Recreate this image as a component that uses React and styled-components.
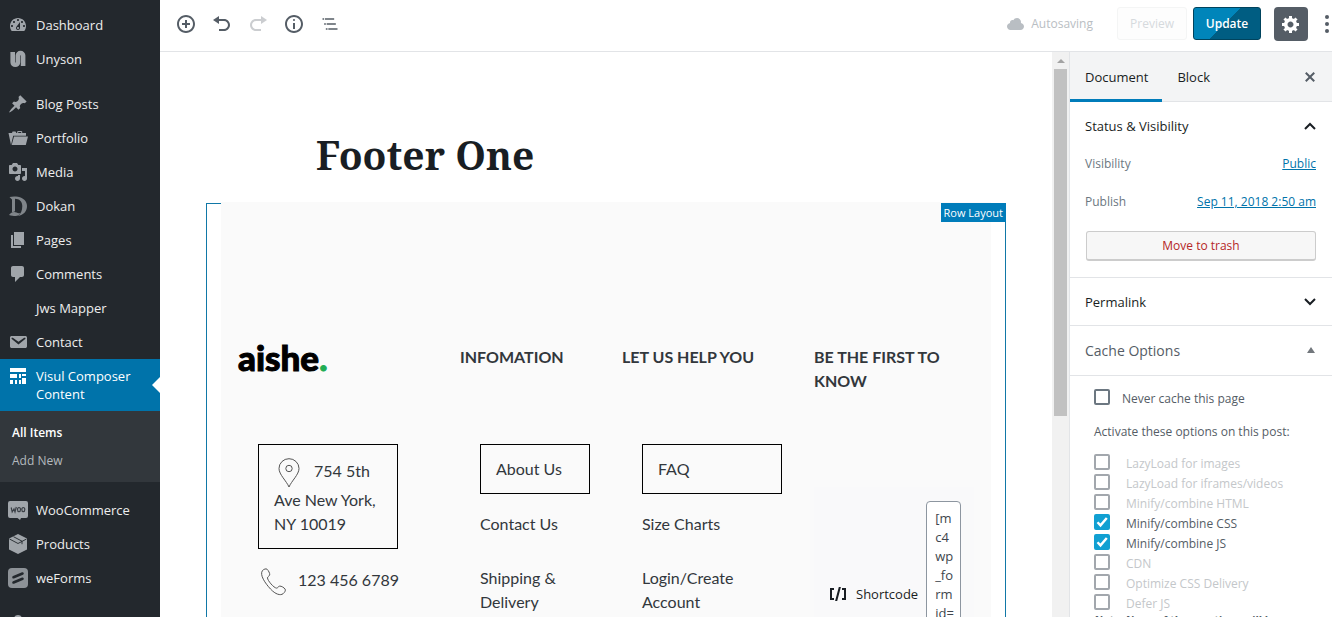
import React from "react";
import styled, { createGlobalStyle, css } from "styled-components";

const ui = '"Open Sans", "Noto Sans", sans-serif';

const GlobalStyle = createGlobalStyle`
  *, *::before, *::after { box-sizing: border-box; }
  body { margin: 0; background: #fff; font: 13px/20px ${ui}; color: #555d66; }
  button, input, textarea { font: inherit; color: inherit; margin: 0; }
  button { border: 0; background: none; padding: 0; cursor: pointer; }
  a { color: #0073aa; }
  h1, h2, ul, p { margin: 0; padding: 0; font-weight: inherit; font-size: inherit; }
  ul { list-style: none; }
  svg { display: block; flex: none; }
`;

const Shell = styled.div`
  display: flex;
  height: 100vh;
  overflow: hidden;
`;

/* Admin menu */
const AdminMenu = styled.nav`
  flex: none;
  width: 160px;
  padding-top: 8px;
  background: #23282d;
  overflow: hidden;
`;
const MenuLink = styled.a`
  position: relative;
  display: flex;
  align-items: flex-start;
  gap: 8px;
  padding: 8px 12px 8px 8px;
  margin-top: ${(p) => (p.$separated ? 11 : 0)}px;
  color: ${(p) => (p.$current ? "#fff" : "#eee")};
  background: ${(p) => (p.$current ? "#0073aa" : "transparent")};
  line-height: 18px;
  text-decoration: none;
  ${(p) =>
    p.$current &&
    css`
      &::after {
        content: "";
        position: absolute;
        right: 0;
        top: 18px;
        border: 8px solid transparent;
        border-right-color: #fff;
        border-left-width: 0;
      }
    `}
`;
const MenuIcon = styled.span`
  flex: none;
  width: 20px;
  height: 18px;
  color: ${(p) => (p.$current ? "#fff" : "#a0a5aa")};
  svg { margin-top: -1px; }
`;
const SubMenu = styled.ul`
  padding: 8px 0 7px;
  background: #32373c;
`;
const SubLink = styled.a`
  display: block;
  padding: 5px 12px;
  font-size: 12px;
  line-height: 18px;
  text-decoration: none;
  color: ${(p) => (p.$current ? "#fff" : "#b4b9be")};
  font-weight: ${(p) => (p.$current ? 600 : 400)};
`;

/* Editor */
const Editor = styled.div`
  flex: 1;
  min-width: 0;
  display: flex;
  flex-direction: column;
`;
const TopBar = styled.header`
  flex: none;
  display: flex;
  align-items: center;
  justify-content: space-between;
  height: 52px;
  padding: 0 0 4px 8px;
  border-bottom: 1px solid #e2e4e7;
`;
const Tools = styled.div`
  display: flex;
  align-items: center;
`;
const ToolButton = styled.button`
  display: grid;
  place-items: center;
  width: 36px;
  height: 36px;
  color: #555d66;
  &:disabled { opacity: 0.3; }
`;
const SaveState = styled.span`
  display: flex;
  align-items: center;
  gap: 5px;
  margin-right: 24px;
  color: #b9bec3;
  font-size: 12px;
`;
const barButton = css`
  height: 33px;
  border-radius: 3px;
  border: 1px solid;
  font-size: 12px;
`;
const PreviewButton = styled.button`
  ${barButton}
  width: 70px;
  margin-right: 6px;
  border-color: #f4f5f5;
  background: #fdfdfd;
  color: #d6dadd;
`;
const UpdateButton = styled.button`
  ${barButton}
  width: 68px;
  margin-right: 13px;
  border-color: #00435d;
  background: linear-gradient(135deg, #0085ba 48%, #005d82 48%);
  color: #fff;
  font-weight: 600;
`;
const SettingsButton = styled.button`
  display: grid;
  place-items: center;
  width: 34px;
  height: 34px;
  border-radius: 4px;
  background: #555d66;
  color: #fff;
`;
const MoreButton = styled.button`
  width: 24px;
  height: 34px;
  color: #555d66;
  svg { margin-left: auto; }
`;
const Workspace = styled.div`
  flex: 1;
  min-height: 0;
  display: flex;
`;
const Canvas = styled.main`
  flex: 1;
  min-width: 0;
  padding: 79px 46px 0;
  overflow: hidden;
`;
const Content = styled.div`
  max-width: 800px;
  margin: 0 auto;
`;
const PageTitle = styled.h1`
  padding: 0 110px;
  margin-bottom: 24px;
  color: #191e23;
  font: bold 39px/48px "Noto Serif", "DejaVu Serif Condensed", "DejaVu Serif", serif;
`;
const RowBlock = styled.section`
  position: relative;
  border: 1px solid #1178a7;
  border-bottom: 0;
  padding: 0 14px;
`;
const RowLabel = styled.span`
  position: absolute;
  top: -1px;
  right: -1px;
  padding: 0 3px;
  background: #007cba;
  color: #fff;
  font-size: 11px;
  line-height: 19px;
`;
const Columns = styled.div`
  display: grid;
  grid-template-columns: 190fr 130fr 160fr 160fr;
  grid-template-rows: 48px auto;
  gap: 51px 32px;
  min-height: 700px;
  margin-top: -2px;
  padding: 143px 17px 0;
  background: #fafafa;
  color: #32373c;
  font: 16px/24px Lato, sans-serif;
  > * { min-width: 0; }
`;
const Logo = styled.div`
  color: #000;
  font-size: 35px;
  line-height: 24px;
  font-weight: 900;
  -webkit-text-stroke: 1px currentColor;
  span { color: #1fad53; }
`;
const ColumnTitle = styled.h2`
  font-weight: 700;
  color: #32373c;
`;
const LinkList = styled.ul`
  padding-left: 20px;
`;
const LinkItem = styled.li`
  padding: 15px 0;
  ${(p) =>
    p.$boxed &&
    css`
      padding: 12px 15px;
      margin-bottom: 3px;
      border: 1px solid #000;
    `}
`;
const ContactList = styled.div`
  padding: 0 30px 0 20px;
`;
const Address = styled.p`
  padding: 13px 15px 12px;
  border: 1px solid #000;
  svg {
    display: inline-block;
    vertical-align: middle;
    margin: 0 14px 0 4px;
  }
`;
const Phone = styled.p`
  display: flex;
  gap: 12px;
  padding: 19px 0 0 2px;
  white-space: nowrap;
`;
const ShortcodeBlock = styled.div`
  display: flex;
  align-items: center;
  align-self: start;
  margin-top: 43px;
  padding: 14px 12px 14px 14px;
  background: #f9f9fa;
`;
const ShortcodeLabel = styled.label`
  display: flex;
  align-items: center;
  gap: 8px;
  margin-right: 8px;
  color: #191e23;
  font: 13px/20px ${ui};
`;
const ShortcodeInput = styled.textarea`
  flex: none;
  width: 35px;
  height: 186px;
  padding: 7px 4px 7px 8px;
  border: 1px solid #8d96a0;
  border-radius: 4px;
  background: #fff;
  color: #40464d;
  font: 13px/19px ${ui};
  resize: none;
  overflow: hidden;
`;
const ScrollTrack = styled.div`
  flex: none;
  width: 17px;
  padding: 6px 2px 0;
  background: #f1f1f1;
  svg { margin: 0 auto 5px; }
`;
const ScrollThumb = styled.div`
  height: 347px;
  background: #c1c1c1;
`;

/* Settings panel */
const Panel = styled.aside`
  flex: none;
  width: 263px;
  border-left: 1px solid #e2e4e7;
  background: #fff;
  overflow: hidden;
  font-size: 12px;
`;
const PanelTabs = styled.div`
  display: flex;
  height: 50px;
  padding-right: 12px;
  background: #f3f4f5;
  border-bottom: 1px solid #e2e4e7;
`;
const Tab = styled.button`
  padding: 3px 14px 0 15px;
  margin-bottom: -1px;
  border-bottom: 3px solid ${(p) => (p.$active ? "#007cba" : "transparent")};
  color: #191e23;
  font-size: 13px;
`;
const CloseButton = styled.button`
  margin-left: auto;
`;
const Section = styled.section`
  padding: 0 16px ${(p) => (p.$open ? 16 : 0)}px 15px;
  border-bottom: 1px solid #e2e4e7;
`;
const SectionToggle = styled.button`
  display: flex;
  align-items: center;
  justify-content: space-between;
  width: 100%;
  height: ${(p) => (p.$tall ? 49 : 47)}px;
  color: ${(p) => (p.$muted ? "#555d66" : "#191e23")};
  font-size: ${(p) => (p.$muted ? 14 : 13)}px;
`;
const Fields = styled.div`
  display: grid;
  gap: 18px;
  padding: 5px 0 19px;
`;
const Field = styled.div`
  display: flex;
  justify-content: space-between;
  color: #6c7781;
`;
const TrashButton = styled.button`
  display: block;
  width: 230px;
  max-width: 100%;
  height: 30px;
  margin-left: auto;
  border: 1px solid #ccc;
  border-bottom-width: 2px;
  border-radius: 3px;
  background: #f7f7f7;
  color: #b52727;
`;
const Options = styled.div`
  padding: 13px 16px 0 24px;
`;
const OptionText = styled.p`
  margin: 13px 0 12px;
  white-space: nowrap;
`;
const Option = styled.label`
  display: flex;
  align-items: flex-start;
  gap: ${(p) => (p.$loose ? 16 : 12)}px;
  height: 20px;
  color: ${(p) => (p.$off ? "#c4c7ca" : "#555d66")};
  white-space: nowrap;
`;
const Tick = styled.input`
  appearance: none;
  flex: none;
  width: 16px;
  height: 16px;
  border: 2px solid ${(p) => (p.disabled ? "#a2a7ad" : "#6c7781")};
  border-radius: 2px;
  background: #fff;
  &:checked {
    border-color: #11a0d2;
    background: #11a0d2 url("data:image/svg+xml,%3Csvg xmlns='http://www.w3.org/2000/svg' viewBox='0 0 12 12'%3E%3Cpath d='M1.5 6.2l3 3.2L10.8 2' fill='none' stroke='%23fff' stroke-width='2.4'/%3E%3C/svg%3E") center / 12px no-repeat;
  }
`;
const Note = styled.p`
  margin-top: -4px;
  font-size: 11px;
  font-weight: 700;
  font-style: italic;
  white-space: nowrap;
`;

const Glyph = ({ d, size = 20, box = 20, children }) => (
  <svg width={size} height={size} viewBox={`0 0 ${box} ${box}`} fill="currentColor" aria-hidden="true">
    {d && <path d={d} />}
    {children}
  </svg>
);

const icons = {
  dashboard: <Glyph d="M3.76 16h12.48c1.1-1.37 1.76-3.11 1.76-5 0-4.42-3.58-8-8-8s-8 3.58-8 8c0 1.89.66 3.63 1.76 5zM10 4c.55 0 1 .45 1 1s-.45 1-1 1-1-.45-1-1 .45-1 1-1zM6 6c.55 0 1 .45 1 1s-.45 1-1 1-1-.45-1-1 .45-1 1-1zm8 0c.55 0 1 .45 1 1s-.45 1-1 1-1-.45-1-1 .45-1 1-1zm-5.37 5.55L12 7v6c0 1.1-.9 2-2 2s-2-.9-2-2c0-.57.24-1.08.63-1.45zM4 10c.55 0 1 .45 1 1s-.45 1-1 1-1-.45-1-1 .45-1 1-1zm12 0c.55 0 1 .45 1 1s-.45 1-1 1-1-.45-1-1 .45-1 1-1zm-5 3c0-.55-.45-1-1-1s-1 .45-1 1 .45 1 1 1 1-.45 1-1z" />,
  unyson: (
    <Glyph>
      <path d="M4.700 3v10.200a2.600 2.600 0 0 0 5.200 0V6.600a2.600 2.600 0 0 1 5.200 0V17" fill="none" stroke="currentColor" strokeWidth="4.600" />
    </Glyph>
  ),
  pin: <Glyph d="M10.44 3.02l1.82-1.82 6.36 6.35-1.83 1.82c-1.05-.68-2.48-.57-3.41.36l-.75.75c-.92.93-1.04 2.35-.35 3.41l-1.83 1.82-2.41-2.41-2.8 2.79c-.42.42-3.38 2.71-3.8 2.29s1.86-3.39 2.28-3.81l2.79-2.79L4.1 9.36l1.83-1.82c1.05.69 2.48.57 3.4-.36l.75-.75c.93-.92 1.05-2.35.36-3.41z" />,
  portfolio: <Glyph d="M4 5H.5L3 17l2.200-9.200H18V5h-3.800V3.600L13.400 3H10l-.8.6V5h-.8l-.9-1.400H4.600zM10.200 4h3v1h-3zM6 8.500h14L17.800 17H3.700z" />,
  media: <Glyph d="M13 11V4c0-.55-.45-1-1-1h-1.67L9 1H5L3.67 3H2c-.55 0-1 .45-1 1v7c0 .55.45 1 1 1h10c.55 0 1-.45 1-1zM7 4.5c1.38 0 2.5 1.12 2.5 2.5S8.38 9.5 7 9.5 4.5 8.38 4.5 7 5.62 4.5 7 4.5zM14 6h5v10.5c0 1.38-1.12 2.5-2.5 2.5S14 17.88 14 16.5s1.12-2.5 2.5-2.5c.17 0 .34.02.5.05V9h-3V6zm-4 8.05V13h2v3.5c0 1.38-1.12 2.5-2.5 2.5S7 17.88 7 16.5 8.12 14 9.5 14c.17 0 .34.02.5.05z" />,
  dokan: (
    <Glyph>
      <g opacity=".75">
        <path d="M1.500 1C4 .3 7 .2 10 .8c5.500 1.200 9 4.500 9 9.200 0 5.500-3.500 9-9 10 2.800-2 4.300-5.500 4.300-10 0-4.500-3-7.300-7.300-7.300v12.500L4 16.500V3.500z" />
        <path d="M1 19c2-3 5-3.800 7.500-2.500 1.500.8 2.500 1 4 .2-.8 2-2.700 3.300-5 3.300-2 0-4-.2-6.500-1z" />
      </g>
    </Glyph>
  ),
  pages: <Glyph d="M6 15V2h10v13H6zm-1 1h8v2H3V5h2v11z" />,
  comments: <Glyph d="M5 2h9c1.100 0 2 .9 2 2v7c0 1.100-.9 2-2 2h-2l-5 5v-5H5c-1.100 0-2-.9-2-2V4c0-1.100.9-2 2-2z" />,
  mail: <Glyph d="M3.87 4h13.25C18.37 4 19 4.59 19 5.79v8.42c0 1.19-.63 1.79-1.88 1.79H3.87c-1.25 0-1.88-.6-1.88-1.79V5.79c0-1.2.63-1.79 1.88-1.79zm6.62 8.6l6.74-5.53c.24-.2.43-.66.13-1.07-.29-.41-.82-.42-1.17-.17l-5.7 3.86L4.8 5.83c-.35-.25-.88-.24-1.17.17-.3.41-.11.87.13 1.07z" />,
  composer: <Glyph d="M2 2h16v4H2zM2 8h7v4H2zM11 8h2v4h-2zM14 8h4v2h-4zM2 14h3v4H2zM7 14h2v4H7zM11 14h2v4h-2zM14 12h4v6h-4z" />,
  woo: (
    <Glyph>
      <path d="M2 1h16a2 2 0 0 1 2 2v13a2 2 0 0 1-2 2h-5l-1 2-2.500-2H2a2 2 0 0 1-2-2V3a2 2 0 0 1 2-2z" />
      <g fill="none" stroke="#3b4046" strokeWidth="1.200">
        <path d="M3.200 7.500l1 4.500L6 9l1 3 1.300-5" />
        <ellipse cx="11" cy="9.600" rx="1.500" ry="2.100" />
        <ellipse cx="15.300" cy="9.600" rx="1.500" ry="2.100" />
      </g>
    </Glyph>
  ),
  box: (
    <Glyph>
      <path d="M10 0l9 4.500v11L10 20l-9-4.500v-11z" />
      <path d="M1.500 5L10 9.500 18.500 5M5.500 2.700l8.500 4.500v3" fill="none" stroke="#23282d" strokeWidth=".9" />
    </Glyph>
  ),
  weforms: (
    <Glyph>
      <rect width="20" height="20" rx="4" opacity=".85" />
      <path d="M5.500 9.200l9-3.700M5.500 14.500l9-3.700" stroke="#23282d" strokeWidth="2.600" strokeLinecap="round" />
    </Glyph>
  ),
  users: (
    <Glyph>
      <circle cx="10" cy="6" r="4" />
      <path d="M3 18c0-5 3-7 7-7s7 2 7 7z" />
    </Glyph>
  ),
};

const menuTop = [
  ["Dashboard", icons.dashboard],
  ["Unyson", icons.unyson],
  ["Blog Posts", icons.pin, true],
  ["Portfolio", icons.portfolio],
  ["Media", icons.media],
  ["Dokan", icons.dokan],
  ["Pages", icons.pages],
  ["Comments", icons.comments],
  ["Jws Mapper", null],
  ["Contact", icons.mail],
];
const menuBottom = [
  ["WooCommerce", icons.woo, true],
  ["Products", icons.box],
  ["weForms", icons.weforms],
  ["", icons.users, true],
];

const MenuItem = ({ label, icon, separated, current }) => (
  <MenuLink href="#" $separated={separated} $current={current}>
    <MenuIcon $current={current}>{icon}</MenuIcon>
    {label}
  </MenuLink>
);

const options = [
  ["LazyLoad for images", false],
  ["LazyLoad for iframes/videos", false],
  ["Minify/combine HTML", false],
  ["Minify/combine CSS", true],
  ["Minify/combine JS", true],
  ["CDN", false],
  ["Optimize CSS Delivery", false],
  ["Defer JS", false],
];

const Chevron = ({ up }) => (
  <svg width="12" height="8" viewBox="0 0 12 8" fill="none" stroke="#191e23" strokeWidth="2" aria-hidden="true">
    <path d={up ? "M1 7l5-5 5 5" : "M1 1l5 5 5-5"} />
  </svg>
);

export default function App() {
  return (
    <Shell>
      <GlobalStyle />
      <AdminMenu>
        {menuTop.map(([label, icon, separated]) => (
          <MenuItem key={label} label={label} icon={icon} separated={separated} />
        ))}
        <MenuItem label="Visul Composer Content" icon={icons.composer} current />
        <SubMenu>
          <li><SubLink href="#" $current>All Items</SubLink></li>
          <li><SubLink href="#">Add New</SubLink></li>
        </SubMenu>
        {menuBottom.map(([label, icon, separated]) => (
          <MenuItem key={label} label={label} icon={icon} separated={separated} />
        ))}
      </AdminMenu>

      <Editor>
        <TopBar>
          <Tools>
            <ToolButton aria-label="Add block">
              <Glyph d="M10 1c-5 0-9 4-9 9s4 9 9 9 9-4 9-9-4-9-9-9zm0 16c-3.9 0-7-3.1-7-7s3.1-7 7-7 7 3.1 7 7-3.1 7-7 7zm1-11H9v3H6v2h3v3h2v-3h3V9h-3V6z" />
            </ToolButton>
            <ToolButton aria-label="Undo">
              <Glyph d="M12 5H7V2L1 6l6 4V7h5c2.200 0 4 1.800 4 4s-1.800 4-4 4H7v2h5c3.300 0 6-2.700 6-6s-2.700-6-6-6z" />
            </ToolButton>
            <ToolButton aria-label="Redo" disabled>
              <Glyph d="M8 5h5V2l6 4-6 4V7H8c-2.200 0-4 1.800-4 4s1.800 4 4 4h5v2H8c-3.300 0-6-2.700-6-6s2.700-6 6-6z" />
            </ToolButton>
            <ToolButton aria-label="Content structure">
              <Glyph d="M9 15h2V9H9v6zm1-10c-.5 0-1 .5-1 1s.5 1 1 1 1-.5 1-1-.5-1-1-1zm0-4c-5 0-9 4-9 9s4 9 9 9 9-4 9-9-4-9-9-9zm0 16c-3.9 0-7-3.1-7-7s3.1-7 7-7 7 3.1 7 7-3.1 7-7 7z" />
            </ToolButton>
            <ToolButton aria-label="Block navigation">
              <Glyph box={24} d="M5 5H3v2h2V5zm3 8h11v-2H8v2zm9-8H6v2h11V5zM7 11H5v2h2v-2zm0 8h2v-2H7v2zm3-2v2h11v-2H10z" />
            </ToolButton>
          </Tools>
          <Tools>
            <SaveState>
              <Glyph d="M14.9 9c1.8.2 3.1 1.7 3.1 3.5 0 1.9-1.6 3.500-3.5 3.500h-10C2.600 16 1 14.400 1 12.500 1 10.700 2.300 9.300 4.100 9 4 8.900 4 8.700 4 8.500 4 7.100 5.100 6 6.500 6c.3 0 .7.1.9.2C8.100 4.900 9.400 4 11 4c2.200 0 4 1.800 4 4 0 .4-.1.7-.1 1z" />
              Autosaving
            </SaveState>
            <PreviewButton>Preview</PreviewButton>
            <UpdateButton>Update</UpdateButton>
            <SettingsButton aria-label="Settings">
              <Glyph d="M18 12h-2.18c-.17.7-.44 1.35-.81 1.93l1.54 1.54-2.1 2.1-1.54-1.54c-.58.36-1.23.63-1.91.79V19H8v-2.18c-.68-.16-1.33-.43-1.91-.79l-1.54 1.54-2.12-2.12 1.54-1.54c-.36-.58-.63-1.23-.79-1.91H1V9.03h2.17c.16-.7.44-1.35.8-1.94L2.43 5.55l2.1-2.1 1.54 1.54c.58-.37 1.24-.64 1.93-.81V2h3v2.18c.68.16 1.33.43 1.91.79l1.54-1.54 2.12 2.12-1.54 1.54c.36.59.64 1.24.8 1.94H18V12zm-8.5 1.5c1.66 0 3-1.34 3-3s-1.34-3-3-3-3 1.34-3 3 1.34 3 3 3z" />
            </SettingsButton>
            <MoreButton aria-label="More">
              <svg width="10" height="20" viewBox="0 0 10 20" fill="currentColor">
                <circle cx="5" cy="3" r="2" />
                <circle cx="5" cy="10" r="2" />
                <circle cx="5" cy="17" r="2" />
              </svg>
            </MoreButton>
          </Tools>
        </TopBar>

        <Workspace>
          <Canvas>
            <Content>
              <PageTitle>Footer One</PageTitle>
              <RowBlock>
                <Columns>
                  <Logo>aishe<span>.</span></Logo>
                  <ColumnTitle>INFOMATION</ColumnTitle>
                  <ColumnTitle>LET US HELP YOU</ColumnTitle>
                  <ColumnTitle>BE THE FIRST TO KNOW</ColumnTitle>

                  <ContactList>
                    <Address>
                      <svg width="22" height="30" viewBox="0 0 22 30" fill="none" stroke="#555" aria-hidden="true">
                        <path d="M11 29C8.500 23 1 16.500 1 10.500a10 9.800 0 0 1 20 0C21 16.500 13.500 23 11 29z" />
                        <circle cx="11" cy="10.500" r="3.200" />
                      </svg>
                      754 5th Ave New York, NY 10019
                    </Address>
                    <Phone>
                      <svg width="26" height="28" viewBox="0 0 26 28" fill="none" stroke="#555" aria-hidden="true">
                        <path d="M2.500 2.500C4 1 6 .5 7 1.200c1.500 1.300 3 4.300 2.700 5.700-.3 1.300-2.200 1.600-2.200 3 0 2.600 6.300 10 9 10.200 1.300.1 1.800-1.900 3.200-2 1.600-.2 4.500 1.600 5.400 3 .8 1.200-.3 3.200-2 4.600-2.700 2.100-7.600.7-12.600-4.700C5.200 15.300-.7 6.800 2.500 2.500z" />
                      </svg>
                      123 456 6789
                    </Phone>
                  </ContactList>
                  <LinkList>
                    <LinkItem $boxed>About Us</LinkItem>
                    <LinkItem>Contact Us</LinkItem>
                    <LinkItem>Shipping &amp; Delivery</LinkItem>
                  </LinkList>
                  <LinkList>
                    <LinkItem $boxed>FAQ</LinkItem>
                    <LinkItem>Size Charts</LinkItem>
                    <LinkItem>Login/Create Account</LinkItem>
                  </LinkList>
                  <ShortcodeBlock>
                    <ShortcodeLabel htmlFor="shortcode">
                      <Glyph d="M6 14H4V6h2V4H2v12h4M7.1 17h2.1l3.7-14h-2.1M14 4v2h2v8h-2v2h4V4" />
                      Shortcode
                    </ShortcodeLabel>
                    <ShortcodeInput id="shortcode" defaultValue={'[mc4wp_form id="1"]'} />
                  </ShortcodeBlock>
                </Columns>
                <RowLabel>Row Layout</RowLabel>
              </RowBlock>
            </Content>
          </Canvas>
          <ScrollTrack>
            <svg width="8" height="6" viewBox="0 0 8 6" fill="#a3a3a3" aria-hidden="true"><path d="M0 5l4-4 4 4z" /></svg>
            <ScrollThumb />
          </ScrollTrack>

          <Panel>
            <PanelTabs>
              <Tab $active>Document</Tab>
              <Tab>Block</Tab>
              <CloseButton aria-label="Close settings">
                <Glyph d="M14.95 6.46L11.41 10l3.54 3.54-1.41 1.41L10 11.42l-3.53 3.53-1.42-1.42L8.58 10 5.05 6.47l1.42-1.42L10 8.58l3.54-3.53z" />
              </CloseButton>
            </PanelTabs>
            <Section $open>
              <SectionToggle>Status &amp; Visibility<Chevron up /></SectionToggle>
              <Fields>
                <Field>Visibility<a href="#">Public</a></Field>
                <Field>Publish<a href="#">Sep 11, 2018 2:50 am</a></Field>
              </Fields>
              <TrashButton>Move to trash</TrashButton>
            </Section>
            <Section>
              <SectionToggle>Permalink<Chevron /></SectionToggle>
            </Section>
            <Section>
              <SectionToggle $tall $muted>
                Cache Options
                <svg width="10" height="10" viewBox="0 0 10 10" fill="#72777c" aria-hidden="true"><path d="M1 7l4-6 4 6z" /></svg>
              </SectionToggle>
            </Section>
            <Options>
              <Option><Tick type="checkbox" />Never cache this page</Option>
              <OptionText>Activate these options on this post:</OptionText>
              {options.map(([label, on]) => (
                <Option key={label} $loose $off={!on}>
                  <Tick type="checkbox" defaultChecked={on} disabled={!on} />
                  {label}
                </Option>
              ))}
              <Note>Note: None of these options will be</Note>
            </Options>
          </Panel>
        </Workspace>
      </Editor>
    </Shell>
  );
}
